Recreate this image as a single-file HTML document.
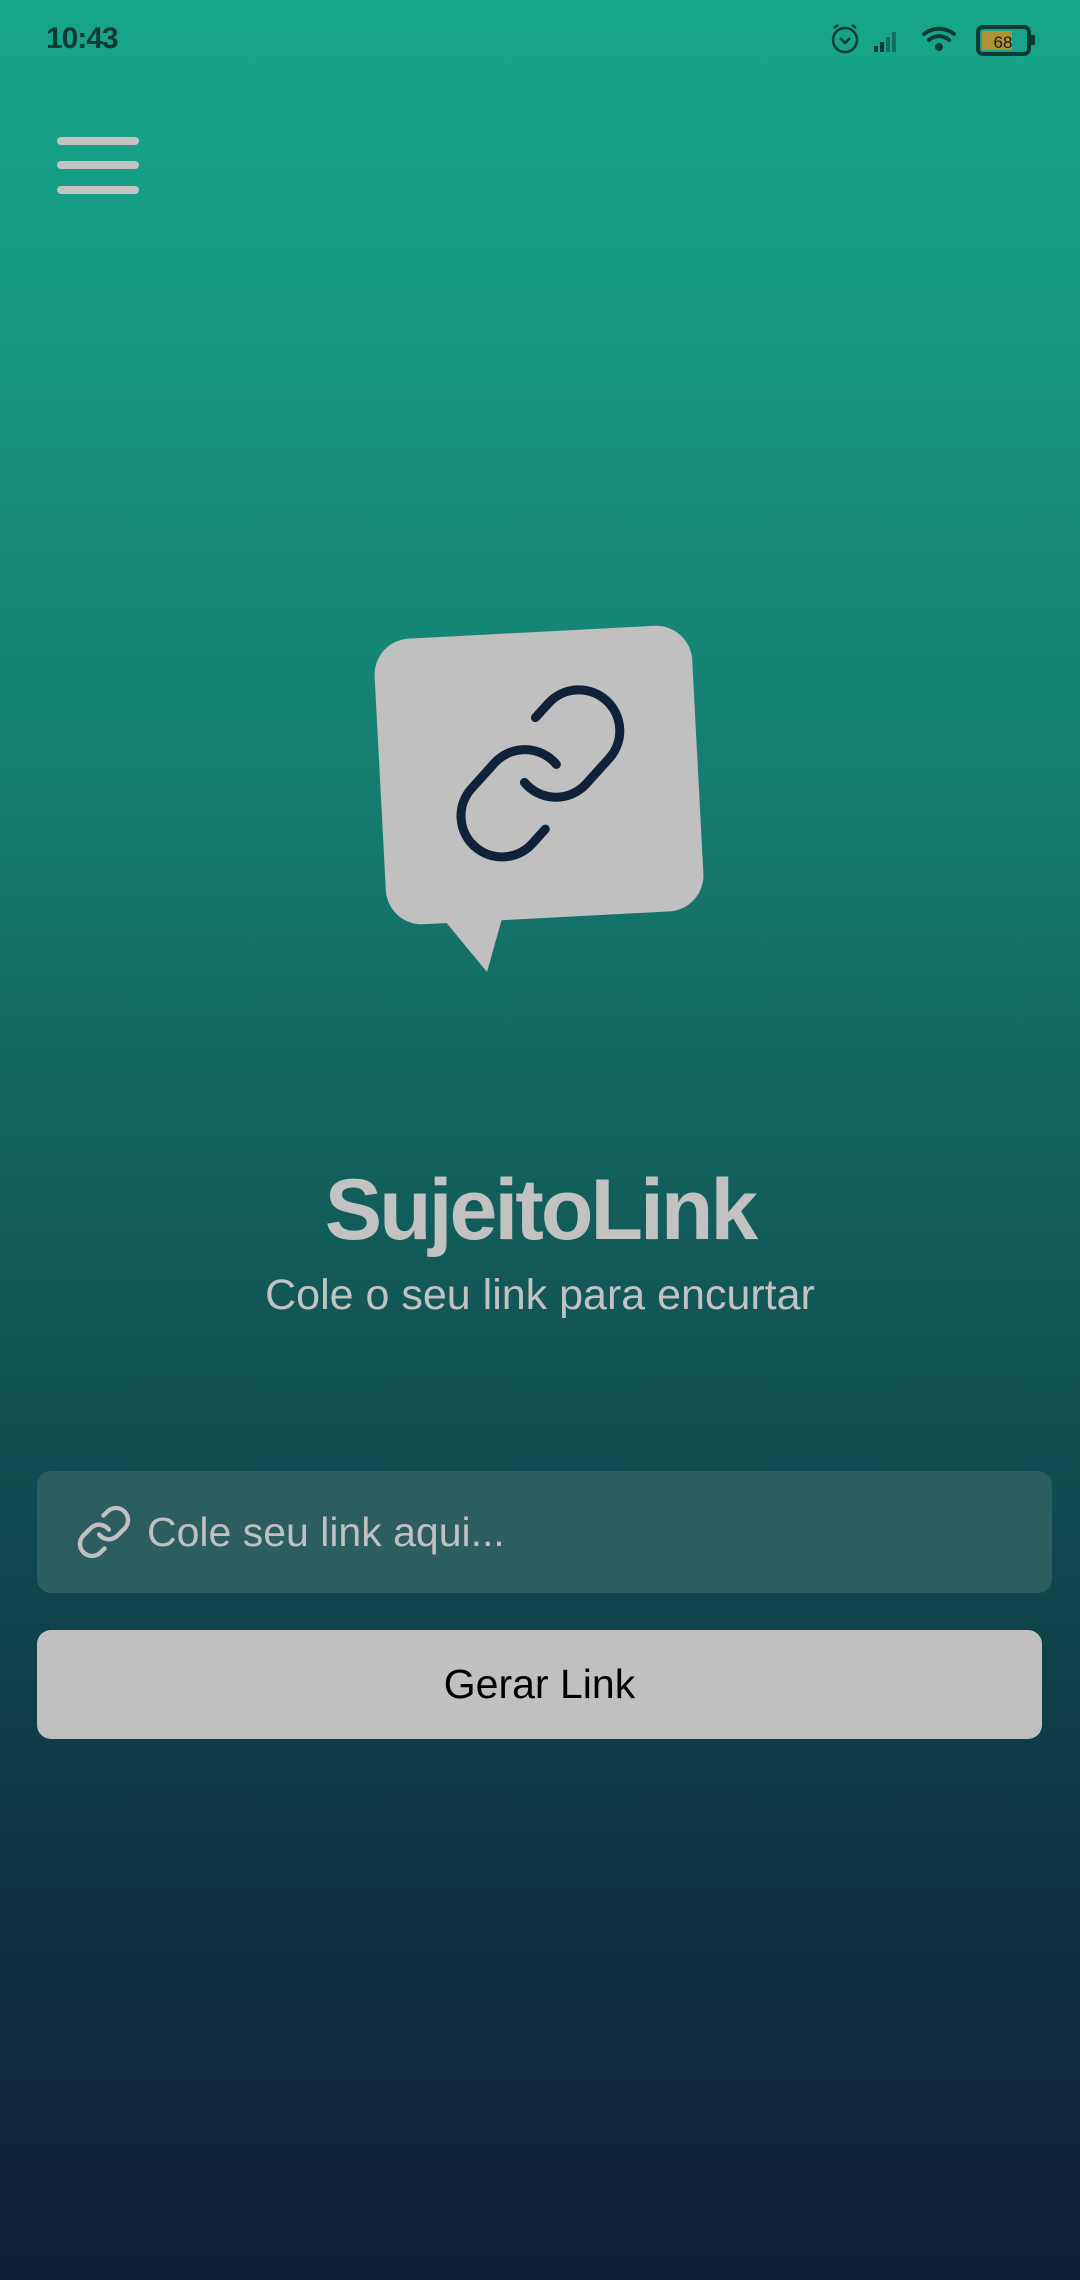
<!DOCTYPE html>
<html><head><meta charset="utf-8"><style>
html,body{margin:0;padding:0}
body{width:1080px;height:2280px;overflow:hidden;position:relative;font-family:"Liberation Sans",sans-serif;
background:linear-gradient(180deg,#17a68a 0%,#16977f 15%,#157c6e 35%,#125f5a 52%,#114a50 66%,#0f3444 82%,#0f1e37 100%);}
.abs{position:absolute}
.ham{left:57px;width:82px;height:8px;border-radius:4px;background:#c3c3c3}
</style></head><body>
<div class="abs" style="left:46px;top:22px;font-size:30px;font-weight:bold;color:#0d3a33;letter-spacing:-1px">10:43</div>
<svg class="abs" style="left:825px;top:20px" width="220" height="40" viewBox="0 0 220 40">
 <g fill="none" stroke="#0d3a33" stroke-width="2.5"><circle cx="20" cy="20" r="12"/><path d="M15 18l5 5 5-5"/><path d="M9 8l4-3M31 8l-4-3"/></g>
 <g fill="#0d3a33"><rect x="49" y="26" width="4" height="6"/><rect x="55" y="22" width="4" height="10"/><rect x="61" y="17" width="4" height="15" opacity=".5"/><rect x="67" y="12" width="4" height="20" opacity=".5"/></g>
 <g fill="none" stroke="#0d3a33" stroke-width="4" stroke-linecap="round"><path d="M99 14a24 24 0 0 1 30 0"/><path d="M104 20a15 15 0 0 1 20 0"/></g><circle cx="114" cy="27" r="4" fill="#0d3a33"/>
 <rect x="153" y="7" width="51" height="27" rx="5" fill="none" stroke="#0d3a33" stroke-width="4"/><rect x="157" y="11" width="30" height="19" fill="#b09236"/><rect x="206" y="15" width="4" height="10" fill="#0d3a33"/>
 <text x="178" y="28" font-size="17" font-family="Liberation Sans" fill="#1a1a1a" text-anchor="middle">68</text>
</svg>
<div class="abs ham" style="top:137px"></div>
<div class="abs ham" style="top:161px"></div>
<div class="abs ham" style="top:186px"></div>
<svg class="abs" style="left:0;top:0" width="1080" height="1100">
 <g transform="rotate(-3 540 775)"><rect x="380" y="632" width="318" height="286" rx="36" fill="#c0c0c0"/></g>
 <path d="M440 915 L487 972 L503 915 Z" fill="#c0c0c0"/>
 <g transform="translate(442 675) scale(8.2) rotate(-3 12 12)" fill="none" stroke="#10213a" stroke-width="1.1" stroke-linecap="round" stroke-linejoin="round">
  <path d="M10 13a5 5 0 0 0 7.54.54l3-3a5 5 0 0 0-7.07-7.07l-1.72 1.71"/>
  <path d="M14 11a5 5 0 0 0-7.54-.54l-3 3a5 5 0 0 0 7.07 7.07l1.71-1.71"/>
 </g>
</svg>
<div class="abs" style="left:0;width:1080px;top:1160px;text-align:center;font-size:86px;font-weight:bold;letter-spacing:-3px;color:#c2c2c2;line-height:100px">SujeitoLink</div>
<div class="abs" style="left:0;width:1080px;top:1270px;text-align:center;font-size:43px;color:#c2c2c2;line-height:50px">Cole o seu link para encurtar</div>
<div class="abs" style="left:37px;top:1471px;width:1015px;height:122px;border-radius:14px;background:#2c5e60"></div>
<svg class="abs" style="left:75px;top:1503px" width="58" height="58" viewBox="0 0 24 24" fill="none" stroke="#c0c0c0" stroke-width="1.8" stroke-linecap="round" stroke-linejoin="round">
 <path d="M10 13a5 5 0 0 0 7.54.54l3-3a5 5 0 0 0-7.07-7.07l-1.72 1.71"/>
 <path d="M14 11a5 5 0 0 0-7.54-.54l-3 3a5 5 0 0 0 7.07 7.07l1.71-1.71"/>
</svg>
<div class="abs" style="left:147px;top:1507px;font-size:41px;color:#c0c0c0;line-height:50px">Cole seu link aqui...</div>
<div class="abs" style="left:37px;top:1630px;width:1005px;height:109px;border-radius:14px;background:#c0c0c0;text-align:center;line-height:109px;font-size:41px;color:#000">Gerar Link</div>
</body></html>
